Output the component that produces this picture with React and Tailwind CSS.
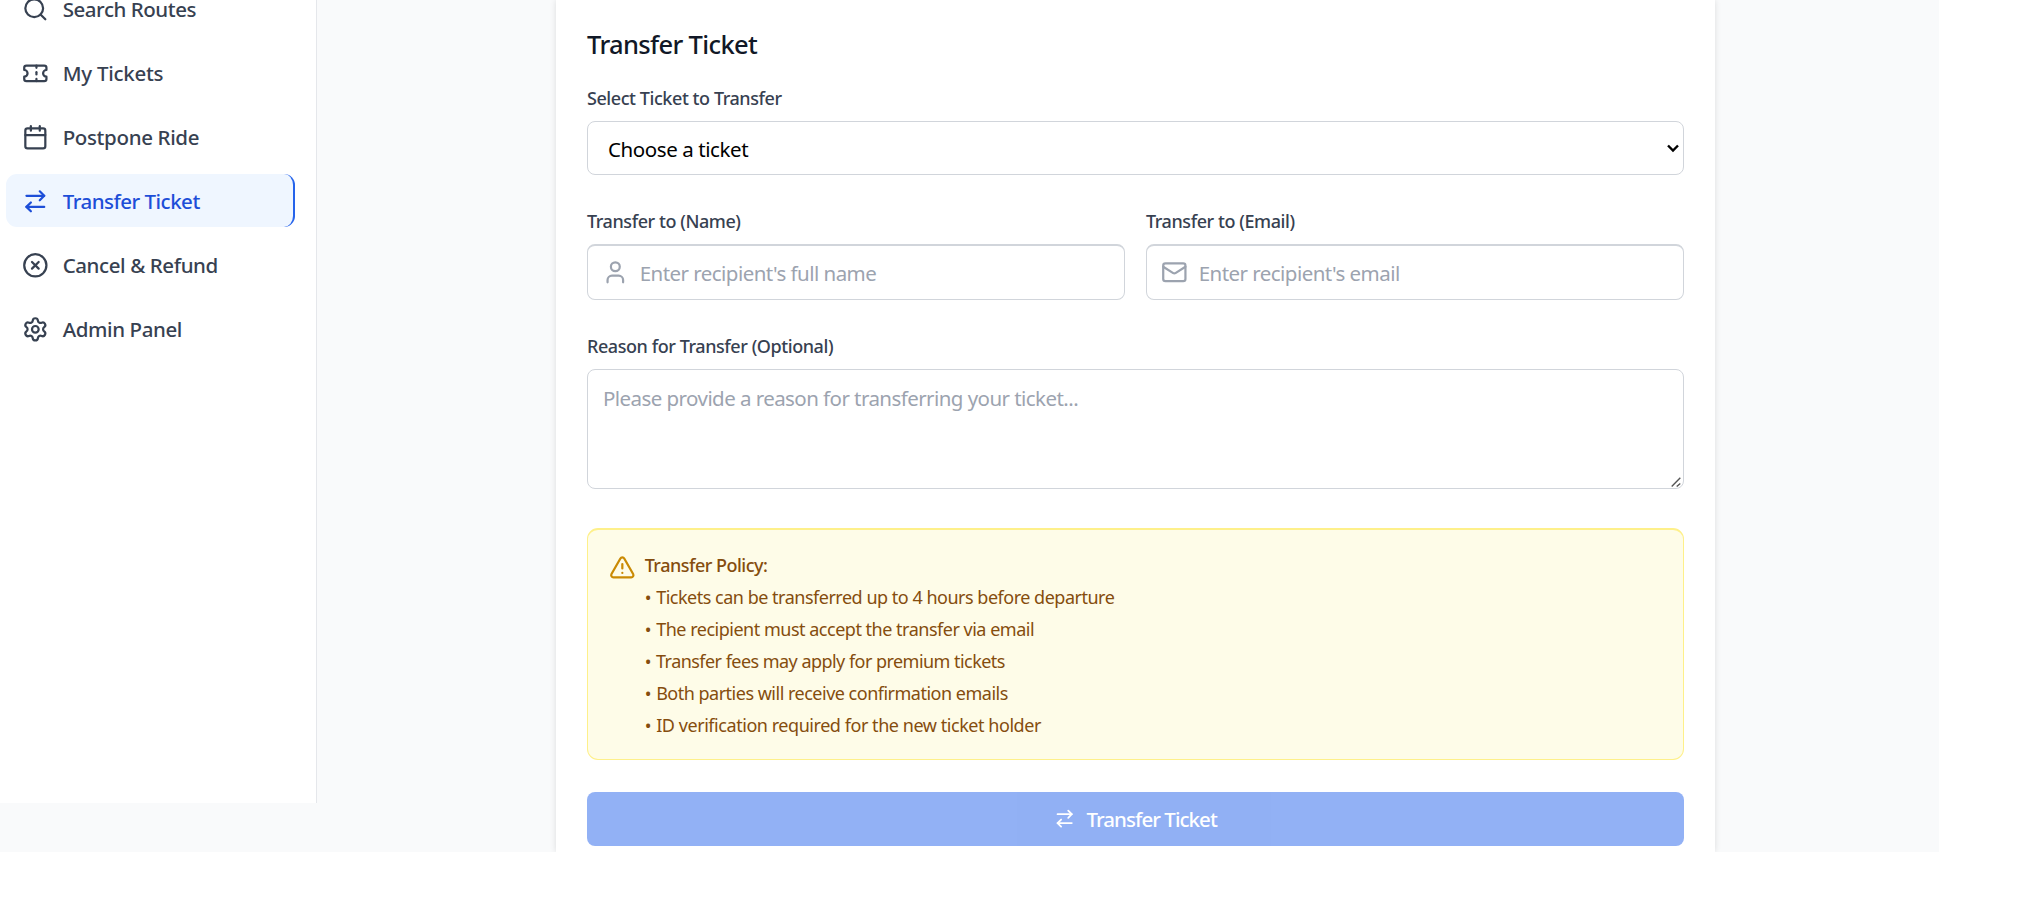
import {
  ArrowRightLeft,
  Calendar,
  CircleX,
  Mail,
  Search,
  Settings,
  Ticket,
  TriangleAlert,
  User,
} from "lucide-react";

const navItems = [
  { label: "Search Routes", icon: Search, tracking: "tracking-[-0.45px]" },
  { label: "My Tickets", icon: Ticket, tracking: "tracking-[-0.25px]" },
  { label: "Postpone Ride", icon: Calendar, tracking: "tracking-[-0.35px]" },
  { label: "Transfer Ticket", icon: ArrowRightLeft, tracking: "tracking-[-0.5px]", active: true },
  { label: "Cancel & Refund", icon: CircleX, tracking: "tracking-[-0.4px]" },
  { label: "Admin Panel", icon: Settings, tracking: "tracking-[-0.4px]" },
];

const policies = [
  { text: "Tickets can be transferred up to 4 hours before departure", tracking: "tracking-[-0.49px]" },
  { text: "The recipient must accept the transfer via email", tracking: "tracking-[-0.49px]" },
  { text: "Transfer fees may apply for premium tickets", tracking: "tracking-[-0.54px]" },
  { text: "Both parties will receive confirmation emails", tracking: "tracking-[-0.5px]" },
  { text: "ID verification required for the new ticket holder", tracking: "tracking-[-0.45px]" },
];

function NavItem({ label, icon: Icon, tracking, active }) {
  return (
    <a
      className={`flex h-[53px] shrink-0 items-center rounded-[11px] pt-0.5 pl-4 text-[20.5px] font-medium ${tracking} ${
        active ? "border-r-2 border-[#2563eb] bg-[#eff6ff] text-[#1d4ed8]" : "text-[#374151]"
      }`}
    >
      <Icon className="mr-3.5 size-[26.67px] shrink-0" />
      {label}
    </a>
  );
}

function Label({ children }) {
  return (
    <label className="block text-[18px] leading-7 font-medium tracking-[-0.43px] text-[#374151]">
      {children}
    </label>
  );
}

function IconInput({ label, icon: Icon, placeholder }) {
  return (
    <div className="flex-1">
      <Label>{label}</Label>
      <div className="mt-[9px] flex h-14 items-center rounded-lg border border-t-2 border-[#d1d5db] pl-3.5">
        <Icon className="size-[26.67px] shrink-0 text-[#9ca3af]" />
        <input
          type="text"
          placeholder={placeholder}
          className="ml-[11px] min-w-0 flex-1 bg-transparent pt-0.5 text-[20.5px] tracking-[-0.54px] outline-none placeholder:text-[#9ca3af]"
        />
      </div>
    </div>
  );
}

export default function App() {
  return (
    <div className="h-[905px] overflow-hidden bg-white font-['Noto_Sans',sans-serif]">
      <div className="flex h-[852px] w-[1939px] overflow-hidden bg-[#f9fafb]">
        <aside className="h-[803px] w-[317px] overflow-hidden border-r border-[#e5e7eb] bg-white">
          <nav className="-mt-[18px] ml-1.5 flex w-[289px] flex-col gap-[11px]">
            {navItems.map((item) => (
              <NavItem key={item.label} {...item} />
            ))}
          </nav>
        </aside>

        <main className="ml-[239px] w-[1159px] bg-white px-[31px] pt-[26px] shadow-[0_0_6px_rgba(0,0,0,0.12)]">
          <h2 className="text-[25.5px] leading-[37px] font-medium tracking-[-0.65px] text-[#111827]">
            Transfer Ticket
          </h2>

          <div className="mt-[21px]">
            <Label>Select Ticket to Transfer</Label>
            <div className="mt-[9px] flex h-[54px] items-center justify-between rounded-lg border border-[#d1d5db] pr-1 pl-5 text-[20.5px] tracking-[-0.42px] text-black">
              <span className="pt-0.5">Choose a ticket</span>
              <svg className="h-[9px] w-3" viewBox="0 0 12 9" fill="none" stroke="currentColor" strokeWidth="2.4">
                <path d="M1 1.5 6 6.5 11 1.5" />
              </svg>
            </div>
          </div>

          <div className="mt-8 flex gap-[21px]">
            <IconInput label="Transfer to (Name)" icon={User} placeholder="Enter recipient's full name" />
            <IconInput label="Transfer to (Email)" icon={Mail} placeholder="Enter recipient's email" />
          </div>

          <div className="mt-8">
            <Label>Reason for Transfer (Optional)</Label>
            <div className="relative mt-[9px] h-[120px]">
              <textarea
                placeholder="Please provide a reason for transferring your ticket..."
                className="block h-full w-full resize-none rounded-lg border border-[#d1d5db] bg-white px-[15px] py-3 text-[20.5px] leading-8 tracking-[-0.56px] outline-none placeholder:text-[#9ca3af]"
              />
              <svg
                className="absolute right-[3px] bottom-0.5 h-[10px] w-[10px] text-[#555]"
                viewBox="0 0 10 10"
                fill="none"
                stroke="currentColor"
                strokeWidth="1.4"
              >
                <path d="M.7 9.5 9.3.7M5.7 9.5 9.3 6.5" />
              </svg>
            </div>
          </div>

          <section className="mt-[39px] flex h-[232px] rounded-[11px] border border-t-2 border-[#fef08a] bg-[#fefce8] pt-[19px] pl-[21px]">
            <TriangleAlert className="mt-[5px] size-[26.67px] shrink-0 text-[#ca8a04]" />
            <div className="ml-[9px] text-[18px] leading-8 text-[#854d0e]">
              <p className="font-medium tracking-[-0.5px]">Transfer Policy:</p>
              <ul>
                {policies.map(({ text, tracking }) => (
                  <li key={text} className={tracking}>
                    <span className="mr-px">•</span> {text}
                  </li>
                ))}
              </ul>
            </div>
          </section>

          <button
            type="button"
            disabled
            className="mt-8 flex h-[54px] w-full items-center justify-center rounded-lg bg-[#2563eb] text-[20.5px] font-medium tracking-[-0.95px] text-white opacity-50"
          >
            <ArrowRightLeft className="mr-[11px] size-[21.33px]" />
            Transfer Ticket
          </button>
        </main>
      </div>
    </div>
  );
}
